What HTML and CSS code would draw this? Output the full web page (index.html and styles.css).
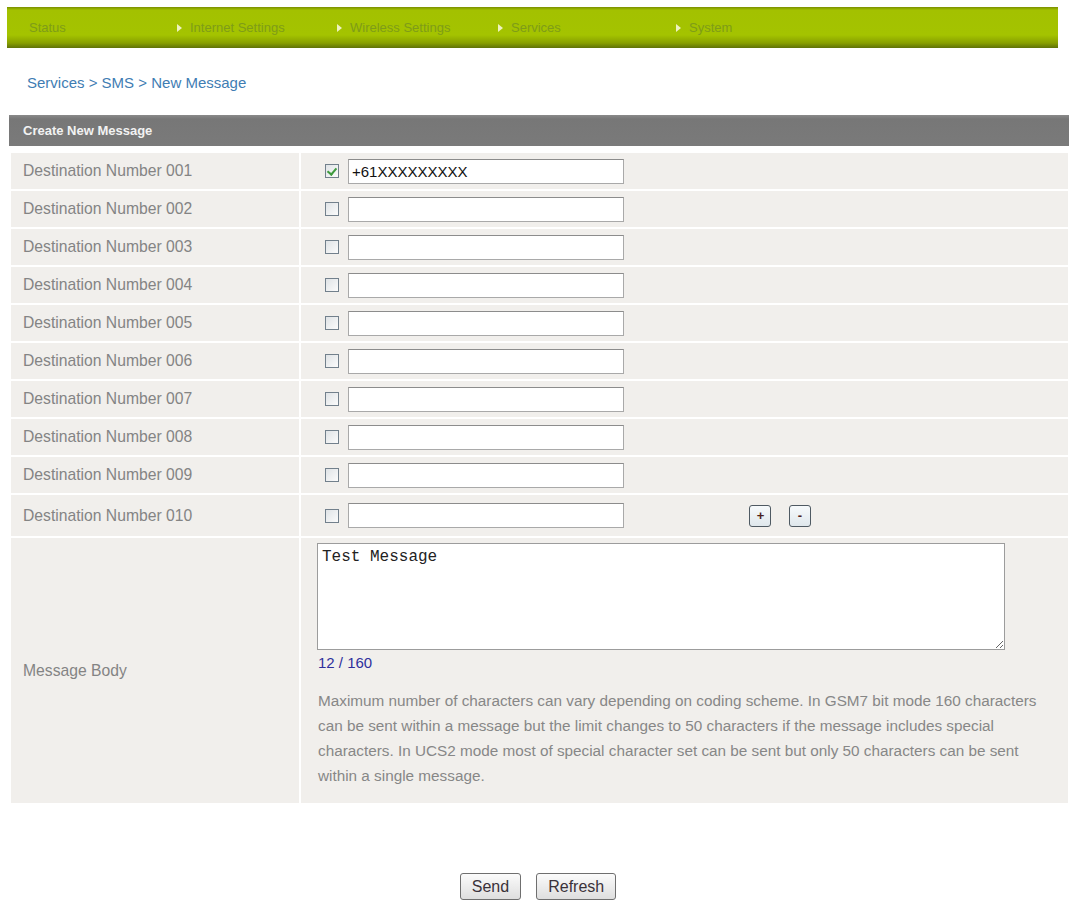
FILE: index.html
```html
<!DOCTYPE html>
<html lang="en">
<head>
    <meta charset="UTF-8">
    <meta name="viewport" content="width=device-width, initial-scale=1.0">
    <title>Services - SMS - New Message</title>
    <link rel="stylesheet" href="styles.css">
</head>
<body>
    <div class="topnav">
        <a href="#" class="nav-item">Status</a>
        <a href="#" class="nav-item has-arrow">Internet Settings</a>
        <a href="#" class="nav-item has-arrow">Wireless Settings</a>
        <a href="#" class="nav-item has-arrow">Services</a>
        <a href="#" class="nav-item has-arrow">System</a>
    </div>

    <div class="crumb">Services &gt; SMS &gt; New Message</div>

    <form class="panel" onsubmit="return false">
        <div class="panel-title">Create New Message</div>
        <table class="form-table">
            <tr>
                <td class="label">Destination Number 001</td>
                <td class="field"><input type="checkbox" class="chk" checked><input type="text" class="num" value="+61XXXXXXXXX"></td>
            </tr>
            <tr>
                <td class="label">Destination Number 002</td>
                <td class="field"><input type="checkbox" class="chk"><input type="text" class="num"></td>
            </tr>
            <tr>
                <td class="label">Destination Number 003</td>
                <td class="field"><input type="checkbox" class="chk"><input type="text" class="num"></td>
            </tr>
            <tr>
                <td class="label">Destination Number 004</td>
                <td class="field"><input type="checkbox" class="chk"><input type="text" class="num"></td>
            </tr>
            <tr>
                <td class="label">Destination Number 005</td>
                <td class="field"><input type="checkbox" class="chk"><input type="text" class="num"></td>
            </tr>
            <tr>
                <td class="label">Destination Number 006</td>
                <td class="field"><input type="checkbox" class="chk"><input type="text" class="num"></td>
            </tr>
            <tr>
                <td class="label">Destination Number 007</td>
                <td class="field"><input type="checkbox" class="chk"><input type="text" class="num"></td>
            </tr>
            <tr>
                <td class="label">Destination Number 008</td>
                <td class="field"><input type="checkbox" class="chk"><input type="text" class="num"></td>
            </tr>
            <tr>
                <td class="label">Destination Number 009</td>
                <td class="field"><input type="checkbox" class="chk"><input type="text" class="num"></td>
            </tr>
            <tr class="last-num">
                <td class="label">Destination Number 010</td>
                <td class="field">
                    <input type="checkbox" class="chk"><input type="text" class="num">
                    <button type="button" class="small-btn add-btn">+</button>
                    <button type="button" class="small-btn">-</button>
                </td>
            </tr>
            <tr>
                <td class="label">Message Body</td>
                <td class="field body-cell">
                    <textarea class="msg">Test Message</textarea>
                    <div class="counter">12 / 160</div>
                    <p class="hint">Maximum number of characters can vary depending on coding scheme. In GSM7 bit mode 160 characters can be sent within a message but the limit changes to 50 characters if the message includes special characters. In UCS2 mode most of special character set can be sent but only 50 characters can be sent within a single message.</p>
                </td>
            </tr>
        </table>
    </form>

    <div class="actions">
        <button type="button" class="btn">Send</button>
        <button type="button" class="btn">Refresh</button>
    </div>
</body>
</html>
```

FILE: styles.css
```css
body {
    margin: 7px;
    font-family: "Liberation Sans", Arial, sans-serif;
    background-color: #fff;
}

/* green menu bar */
.topnav {
    width: 1051px;
    height: 41px;
    box-sizing: border-box;
    padding-left: 22px;
    display: grid;
    grid-template-columns: 148px 160px 161px 178px auto;
    align-items: center;
    background: linear-gradient(#7a8f00 0, #a3c100 3px, #a4c300 28px, #889f00 36px, #5f7208 41px);
}
.nav-item {
    font-size: 13px;
    color: #7e9c18;
    text-decoration: none;
    display: flex;
    align-items: center;
}
.nav-item.has-arrow::before {
    content: "";
    width: 0;
    height: 0;
    border-top: 4px solid transparent;
    border-bottom: 4px solid transparent;
    border-left: 5px solid #eef2c0;
    margin-right: 8px;
}

.crumb {
    margin-top: 25px;
    padding-left: 20px;
    font-size: 15px;
    line-height: 20px;
    color: #3f7db3;
}

.panel {
    margin: 22px 0 0 2px;
    width: 1061px;
}
.panel-title {
    height: 31px;
    line-height: 31px;
    padding-left: 14px;
    background: linear-gradient(#8a8a8a, #777 4px, #7a7a7a);
    color: #f2f2f2;
    font-size: 13px;
    font-weight: bold;
}

.form-table {
    width: 100%;
    margin-top: 5px;
    border-spacing: 2px;
}
.form-table td {
    background-color: #f1efec;
    height: 36px;
    padding: 0;
    vertical-align: middle;
}
.form-table .label {
    width: 276px;
    padding-left: 12px;
    font-size: 15.7px;
    color: #848484;
}
.form-table .field {
    padding-left: 24px;
}
.form-table .last-num td {
    height: 41px;
}

.chk {
    appearance: none;
    -webkit-appearance: none;
    width: 14px;
    height: 14px;
    margin: 0 9px 0 0;
    vertical-align: middle;
    border: 1px solid #72808c;
    background: linear-gradient(135deg, #dfe3e6, #fbfbfb);
    position: relative;
}
.chk:checked::after {
    content: "";
    position: absolute;
    left: 3px;
    top: 1px;
    width: 4px;
    height: 7px;
    border: solid #3e9a3e;
    border-width: 0 2px 2px 0;
    transform: rotate(40deg);
}

.num {
    width: 276px;
    height: 25px;
    box-sizing: border-box;
    vertical-align: middle;
    border: 1px solid #a9a9a9;
    border-top-color: #8c8c8c;
    padding: 0 3px;
    font-family: "Liberation Sans", Arial, sans-serif;
    font-size: 15px;
    color: #111;
    background: #fff;
}

.small-btn {
    width: 22px;
    height: 22px;
    padding: 0;
    vertical-align: middle;
    border: 1px solid #4f5a63;
    border-radius: 3px;
    background: linear-gradient(#f7fafc, #dfe7ec);
    font-family: "Liberation Sans", Arial, sans-serif;
    font-size: 13px;
    font-weight: bold;
    color: #4a2020;
}
.small-btn.add-btn {
    margin-left: 121px;
    margin-right: 13px;
}

/* message body cell: textarea, counter and hint stacked */
.form-table .body-cell {
    padding: 5px 0 0 16px;
    vertical-align: top;
}
.msg {
    display: block;
    width: 688px;
    height: 107px;
    box-sizing: border-box;
    border: 1px solid #9c9c9c;
    padding: 4px 4px;
    font-family: "Liberation Mono", "Courier New", monospace;
    font-size: 16px;
    color: #222;
    resize: both;
}
.counter {
    margin-top: 3px;
    padding-left: 1px;
    font-size: 15px;
    line-height: 20px;
    color: #2f2f9c;
}
.hint {
    max-width: 740px;
    margin: 15px 0 15px 1px;
    font-size: 15.3px;
    line-height: 25px;
    color: #878787;
}

.actions {
    margin-top: 68px;
    display: flex;
    justify-content: center;
    gap: 15px;
}
.btn {
    height: 27px;
    padding: 0 11px;
    border: 1px solid #6f6f6f;
    border-radius: 3px;
    background: linear-gradient(#fbfbfb, #dedede);
    font-family: "Liberation Sans", Arial, sans-serif;
    font-size: 16px;
    color: #3a323a;
}
```
